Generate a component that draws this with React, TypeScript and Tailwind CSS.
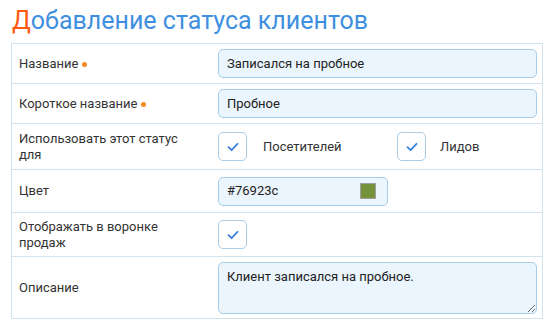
import { useState } from "react";

const FONT = { fontFamily: "Roboto, 'Noto Sans', sans-serif" };

function Dot() {
  return <span className="ml-1 inline-block h-[5px] w-[5px] rounded-full bg-[#f5891f] align-middle" />;
}

function Check({ checked, onToggle }: { checked: boolean; onToggle: () => void }) {
  return (
    <button
      onClick={onToggle}
      className="flex h-[29px] w-[29px] shrink-0 items-center justify-center rounded-[5px] border border-[#a9cde8] bg-white"
    >
      {checked && (
        <svg width="12" height="10" viewBox="0 0 12 10">
          <path d="M1.5 5.2 L4.6 8.2 L10.5 1.8" fill="none" stroke="#3b82e0" strokeWidth="1.8" strokeLinecap="round" strokeLinejoin="round" />
        </svg>
      )}
    </button>
  );
}

function Row({ label, h, children }: { label: React.ReactNode; h: string; children: React.ReactNode }) {
  return (
    <div className={`flex border-b border-[#d3e3ee] ${h}`}>
      <div className="flex w-[206px] shrink-0 items-center pl-[7px] pr-2 text-[13px] leading-[16px] text-[#333]">
        <div className="max-w-[172px]">{label}</div>
      </div>
      <div className="flex flex-1 items-center pr-[5px]">{children}</div>
    </div>
  );
}

export default function App() {
  const [visitors, setVisitors] = useState(true);
  const [leads, setLeads] = useState(true);
  const [funnel, setFunnel] = useState(true);

  const inputCls =
    "h-[29px] rounded-[5px] border border-[#a9cde8] bg-[#ebf5fd] px-[8px] text-[13px] text-[#222] outline-none";

  return (
    <div className="h-[323px] w-[560px] overflow-hidden bg-white" style={FONT}>
      <h1 className="pl-[12px] pt-[5px] text-[25px] leading-[31px] text-[#3f8fe0]">
        <span className="text-[#ff5a14]">Д</span>обавление статуса клиентов
      </h1>
      <div className="ml-[11px] mt-[7px] w-[532px] border-x border-t border-[#d3e3ee]">
        <Row label={<span>Название<Dot /></span>} h="h-[40px]">
          <input className={`${inputCls} w-full`} defaultValue="Записался на пробное" />
        </Row>
        <Row label={<span>Короткое название<Dot /></span>} h="h-[40px]">
          <input className={`${inputCls} w-full`} defaultValue="Пробное" />
        </Row>
        <Row label="Использовать этот статус для" h="h-[46px]">
          <Check checked={visitors} onToggle={() => setVisitors(!visitors)} />
          <span className="ml-[16px] w-[134px] text-[13px] text-[#333]">Посетителей</span>
          <Check checked={leads} onToggle={() => setLeads(!leads)} />
          <span className="ml-[14px] text-[13px] text-[#333]">Лидов</span>
        </Row>
        <Row label="Цвет" h="h-[43px]">
          <div className={`${inputCls} flex w-[170px] items-center justify-between pr-[11px]`}>
            <span>#76923c</span>
            <span className="h-[16px] w-[16px] border border-[#a0a0a0] bg-[#76923c]" />
          </div>
        </Row>
        <Row label="Отображать в воронке продаж" h="h-[44px]">
          <Check checked={funnel} onToggle={() => setFunnel(!funnel)} />
        </Row>
        <Row label="Описание" h="h-[62px]">
          <textarea
            className="h-[52px] w-full resize-y rounded-[5px] border border-[#a9cde8] bg-[#ebf5fd] px-[8px] py-[6px] text-[13px] leading-[16px] text-[#222] outline-none"
            defaultValue="Клиент записался на пробное."
          />
        </Row>
      </div>
    </div>
  );
}
